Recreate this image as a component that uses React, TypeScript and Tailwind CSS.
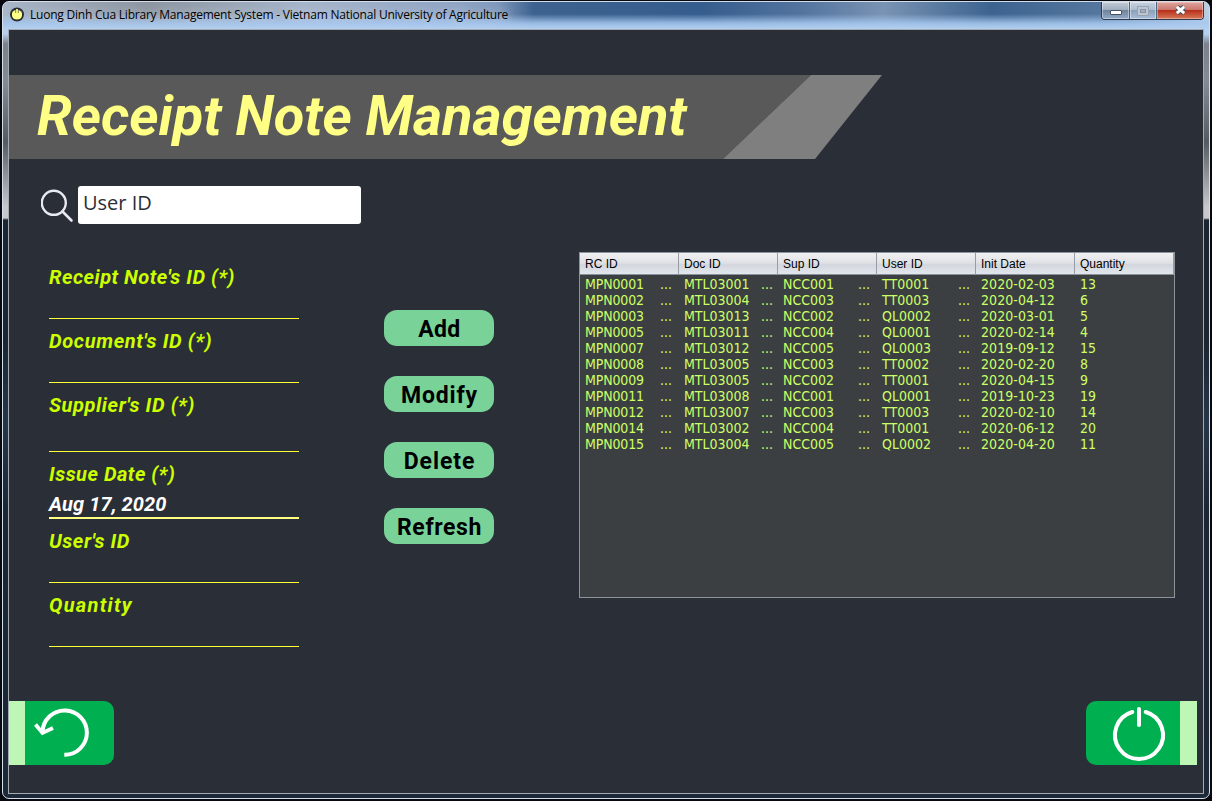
import React from "react";

const rows = [
  ["MPN0001", "MTL03001", "NCC001", "TT0001", "2020-02-03", "13"],
  ["MPN0002", "MTL03004", "NCC003", "TT0003", "2020-04-12", "6"],
  ["MPN0003", "MTL03013", "NCC002", "QL0002", "2020-03-01", "5"],
  ["MPN0005", "MTL03011", "NCC004", "QL0001", "2020-02-14", "4"],
  ["MPN0007", "MTL03012", "NCC005", "QL0003", "2019-09-12", "15"],
  ["MPN0008", "MTL03005", "NCC003", "TT0002", "2020-02-20", "8"],
  ["MPN0009", "MTL03005", "NCC002", "TT0001", "2020-04-15", "9"],
  ["MPN0011", "MTL03008", "NCC001", "QL0001", "2019-10-23", "19"],
  ["MPN0012", "MTL03007", "NCC003", "TT0003", "2020-02-10", "14"],
  ["MPN0014", "MTL03002", "NCC004", "TT0001", "2020-06-12", "20"],
  ["MPN0015", "MTL03004", "NCC005", "QL0002", "2020-04-20", "11"],
];

const headers = ["RC ID", "Doc ID", "Sup ID", "User ID", "Init Date", "Quantity"];

const ellipsisPad = ["pr-[7px]", "pr-[5px]", "pr-[7px]", "pr-[6px]", "", ""];

const fields = [
  { label: "Receipt Note's ID (*)", value: "", tracking: "tracking-[0.5px]", box: "h-[64px] border-b border-[#ffff33]" },
  { label: "Document's ID (*)", value: "", tracking: "tracking-[0.66px]", box: "h-[64px] border-b border-[#ffff33]" },
  { label: "Supplier's ID (*)", value: "", tracking: "tracking-[0.62px]", box: "h-[69px] border-b border-[#ffff33]" },
  { label: "Issue Date (*)", value: "Aug 17, 2020", tracking: "tracking-[0.5px]", box: "h-[67px] border-b-2 border-[#ffff80]" },
  { label: "User's ID", value: "", tracking: "tracking-[0.55px]", box: "h-[64px] border-b border-[#ffff33]" },
  { label: "Quantity", value: "", tracking: "tracking-[1.3px]", box: "h-[64px] border-b border-[#ffff33]" },
];

const actions = [
  { label: "Add", tracking: "tracking-[0.3px]" },
  { label: "Modify", tracking: "tracking-[0.8px]" },
  { label: "Delete", tracking: "tracking-[0.9px]" },
  { label: "Refresh", tracking: "tracking-[0.6px]" },
];

function TitleBar() {
  return (
    <header className="flex h-[27px] shrink-0 items-start justify-between bg-[linear-gradient(to_bottom,transparent_0px,transparent_12px,rgba(166,200,239,.85)_21px,#b4d0f0_27px),linear-gradient(to_right,#a8b6c8_0%,#8d95a1_12%,#a5b5ca_25%,#8fa4c4_38%,#7f98bb_41%,#3d628f_44%,#355d8d_58%,#52739e_66%,#7993b3_73%,#3c638f_82%,#55779e_91%,#bdcee2_100%)] pl-[6px]">
      <div className="flex items-center gap-[6px] pt-[5px]">
        <svg width="15" height="15" viewBox="0 0 15 15">
          <circle cx="8" cy="7.5" r="7" fill="#292e36" />
          <path d="M3 6 Q4 4 6 3 H10 Q12 4 13 6 V9 Q12 12.5 8 12.5 Q4 12.5 3 9 Z" fill="#ffff85" />
          <path d="M6.5 2.5 V6 H9.5 V2.5 Z" fill="#292e36" />
          <path d="M8 2 V7" stroke="#ffff85" strokeWidth="1.8" />
        </svg>
        <span className="whitespace-nowrap font-['Open_Sans'] text-[12px] leading-[15px] tracking-[-0.22px] text-black [text-shadow:0_0_8px_rgba(230,238,248,.8)]">
          Luong Dinh Cua Library Management System - Vietnam National University of Agriculture
        </span>
      </div>
      <div className="mr-[5px] flex h-[18px] overflow-hidden rounded-b-[4px] border border-t-0 border-[#293a51]">
        <button className="flex w-[28px] items-end justify-center border-r border-[#50647e] bg-[linear-gradient(#c2cbd7_0%,#9dacbd_48%,#70839b_50%,#93abc8_100%)] pb-[4px] shadow-[inset_0_0_0_1px_rgba(255,255,255,.4)]">
          <span className="h-[5px] w-[12px] rounded-[1px] border border-[#495263] bg-white" />
        </button>
        <button className="flex w-[27px] items-center justify-center border-r border-[#50647e] bg-[linear-gradient(#c6d1df_0%,#aabace_48%,#8ba0b9_50%,#a9c0da_100%)] shadow-[inset_0_0_0_1px_rgba(255,255,255,.4)]">
          <svg width="12" height="10" viewBox="0 0 12 10">
            <rect x="0.5" y="0.5" width="11" height="9" fill="#bdc5d0" stroke="#97a3b3" />
            <rect x="3.5" y="3.5" width="5" height="3" fill="#a2afc0" stroke="#8592a5" />
          </svg>
        </button>
        <button className="flex w-[46px] items-center justify-center bg-[linear-gradient(#dda6a0_0%,#cb7568_48%,#b7301c_50%,#d77958_100%)] pb-px shadow-[inset_0_0_0_1px_rgba(255,220,210,.45)]">
          <svg width="13" height="12" viewBox="0 0 13 12">
            <path d="M3 3 L10 9 M10 3 L3 9" stroke="#4a5262" strokeWidth="5" />
            <path d="M2.8 2.8 L10.2 9.2 M10.2 2.8 L2.8 9.2" stroke="#fff" strokeWidth="2.9" />
          </svg>
        </button>
      </div>
    </header>
  );
}

function Banner() {
  return (
    <div className="relative mt-[45px] h-[84px] w-[873px] shrink-0">
      <svg className="absolute inset-0" width="873" height="84" viewBox="0 0 873 84">
        <path d="M0 0 H802 L714 84 H0 Z" fill="#595959" />
        <path d="M802 0 H873 L806 84 H714 Z" fill="#7f7f7f" />
      </svg>
      <h1 className="relative whitespace-nowrap pl-[28px] font-['Roboto'] text-[56px] font-bold italic leading-[82px] tracking-[-0.06px] text-[#ffff85]">
        Receipt Note Management
      </h1>
    </div>
  );
}

function Table() {
  return (
    <div className="h-[346px] w-[596px] border border-[#8e949c] bg-[#3c3f41]">
      <div className="grid h-[22px] grid-cols-[99px_99px_99px_99px_99px_99px] border-b border-[#8a9099] bg-[linear-gradient(#f1f1f3_0%,#e0e1e5_48%,#d3d6dc_55%,#e2e7ee_100%)]">
        {headers.map((h) => (
          <div key={h} className="border-r border-[#979ca5] pl-[5px] font-['Liberation_Sans'] text-[12px] leading-[22px] text-black">
            {h}
          </div>
        ))}
      </div>
      <div className="pt-px">
        {rows.map((r) => (
          <div key={r[0]} className="grid h-[16px] grid-cols-[99px_99px_99px_99px_99px_99px] font-['DejaVu_Sans_Condensed','Noto_Sans',sans-serif] text-[14px] leading-[16px] text-[#ccff66]">
            {r.map((c, i) => (
              <div key={i} className={"flex justify-between whitespace-nowrap pl-[5px] " + ellipsisPad[i]}>
                <span className={i === 0 ? "tracking-[-0.15px]" : i === 4 ? "tracking-[0.06px]" : ""}>{c}</span>
                {i < 4 && <span>...</span>}
              </div>
            ))}
          </div>
        ))}
      </div>
    </div>
  );
}

export default function App() {
  return (
    <div className="h-[801px] w-[1212px] overflow-hidden bg-[#07090f] pl-[2px] pt-px">
      <div className="flex h-[798px] w-[1208px] flex-col overflow-hidden rounded-[7px] border border-[#d5dfeb] bg-[linear-gradient(to_bottom,#b4d0f0_0px,#b4d0f0_32px,#7b828b_42px,#858b93_80px,#545c61_140px,#c8c8cc_205px,#c8c8cc_216px,#1c2633_218px,#1c2633_340px,#26364a_420px,#1b2533_520px,#1d2838_100%)]">
        <TitleBar />
        <main className="mx-[5px] flex h-[765px] flex-col border border-[#a3aab2] bg-[#2a2e37]">
          <Banner />
          <div className="mt-[27px] flex h-[38px] shrink-0 items-center pl-[32px]">
            <svg width="34" height="36" viewBox="0 0 34 36">
              <circle cx="12.8" cy="15.8" r="12" fill="none" stroke="#e8eaf2" strokeWidth="2.4" />
              <path d="M21.5 24.5 L30.5 33.5" stroke="#e8eaf2" strokeWidth="2.6" strokeLinecap="round" />
            </svg>
            <div className="ml-[3px] h-[38px] w-[283px] rounded-[3px] bg-white pl-[5px] font-['Open_Sans'] text-[20px] leading-[34px] text-[#2b2e37]">User ID</div>
          </div>
          <div className="flex h-[477px] shrink-0">
            <form className="ml-[40px] w-[250px] pt-[31px]">
              {fields.map((f) => (
                <div key={f.label} className={"whitespace-nowrap pt-[10px] font-['Roboto'] text-[20px] font-bold italic leading-[25px] " + f.box}>
                  <div className={"text-[#ccff00] " + f.tracking}>{f.label}</div>
                  {f.value && <div className="pt-[5px] tracking-[0.1px] text-white">{f.value}</div>}
                </div>
              ))}
            </form>
            <div className="ml-[85px] flex w-[110px] flex-col gap-[30px] pt-[86px]">
              {actions.map((a) => (
                <button key={a.label} className={"h-[36px] rounded-[13px] bg-[#79d399] pl-px pt-[4px] font-['Roboto'] text-[23px] font-bold leading-[32px] text-black " + a.tracking}>
                  {a.label}
                </button>
              ))}
            </div>
            <div className="ml-[85px] pt-[28px]">
              <Table />
            </div>
          </div>
          <div className="flex h-[64px] shrink-0 justify-between pr-[6px]">
            <button className="flex h-[64px] w-[105px] rounded-r-[10px] border-l-[16px] border-[#bdf6b5] bg-[#00b050]">
              <svg width="89" height="64" viewBox="0 0 89 64" fill="none" stroke="#fff" strokeWidth="4">
                <path d="M17.5 31 A22.2 22.2 0 1 1 39.3 53.8" />
                <path d="M10.5 23.5 L17.5 32 L28 27" strokeWidth="3.8" />
              </svg>
            </button>
            <button className="flex h-[64px] w-[111px] rounded-l-[10px] border-r-[17px] border-[#bdf6b5] bg-[#00b050]">
              <svg width="94" height="64" viewBox="0 0 94 64" fill="none" stroke="#fff" strokeWidth="4" strokeLinecap="round">
                <path d="M46.3 11 A24 24 0 1 0 59.7 11" />
                <path d="M53 8 V24" />
              </svg>
            </button>
          </div>
        </main>
      </div>
    </div>
  );
}
